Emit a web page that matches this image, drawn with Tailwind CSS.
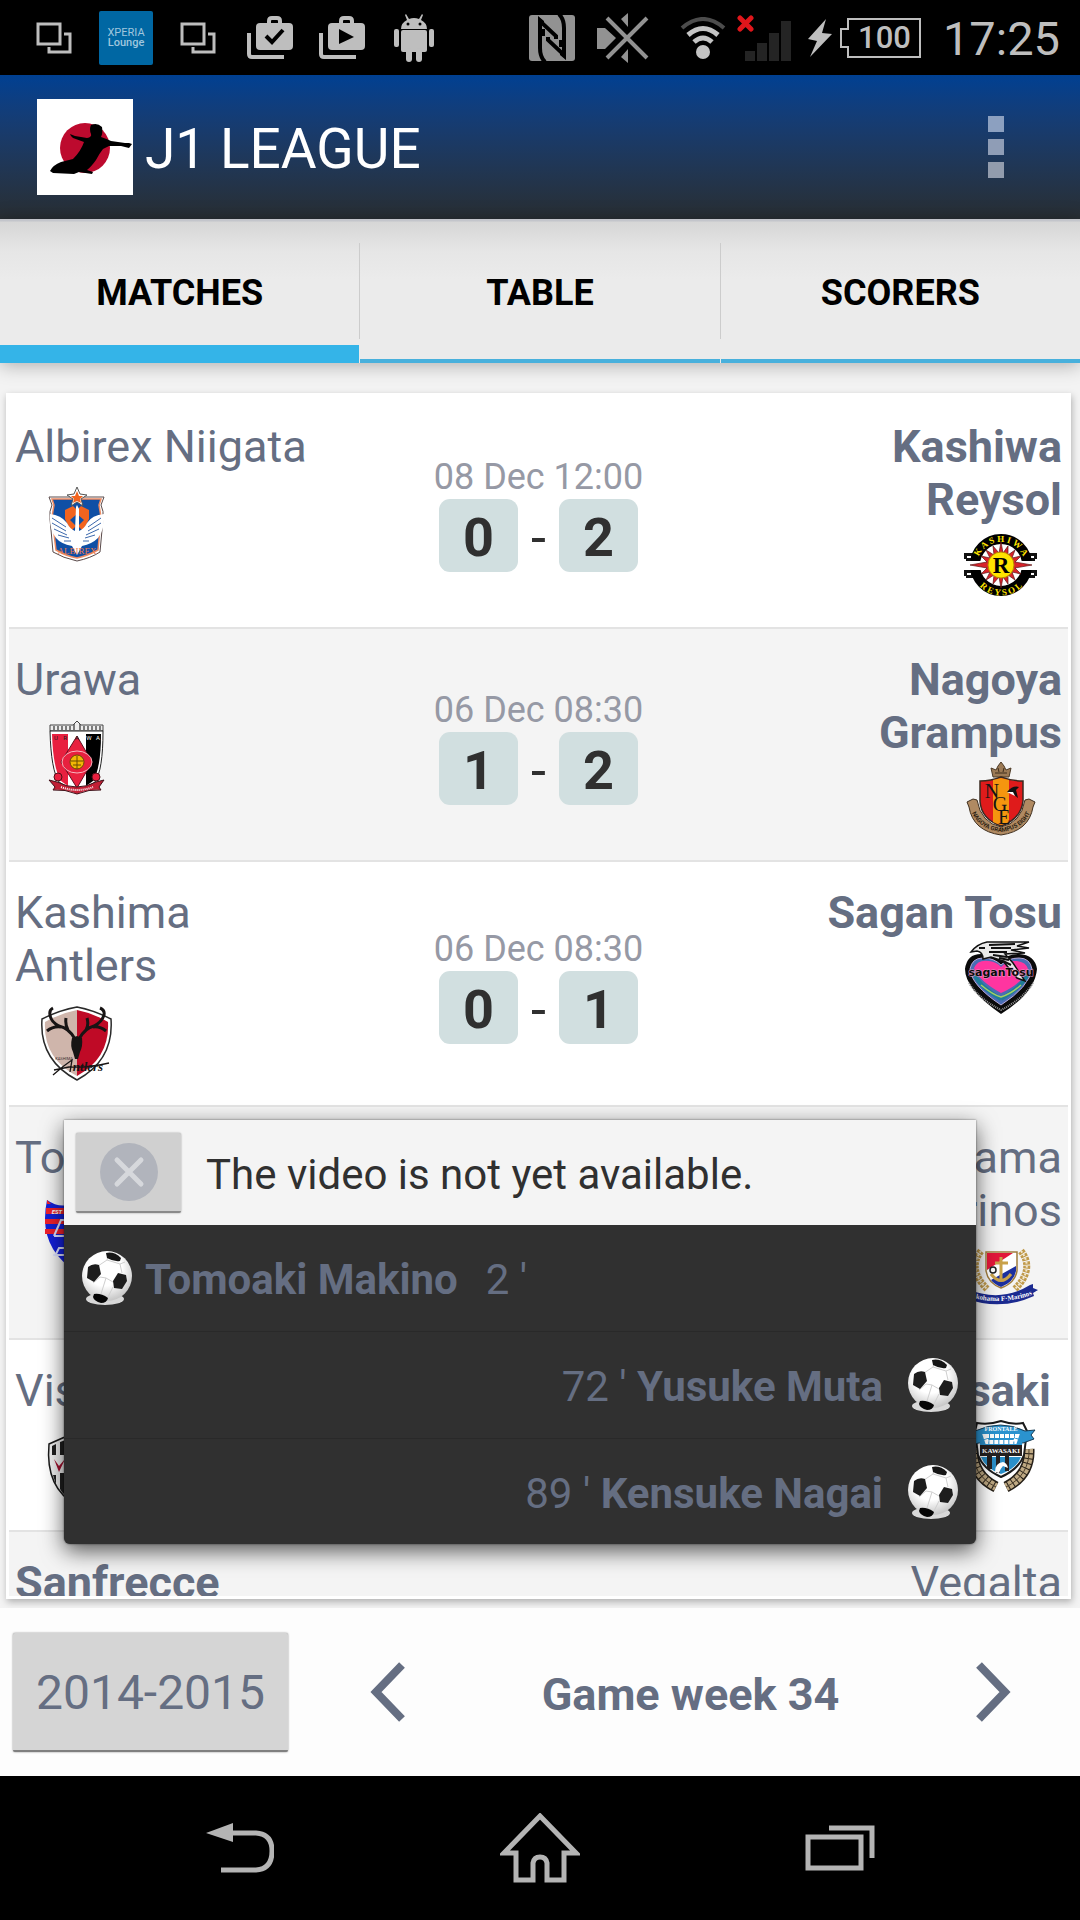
<!DOCTYPE html>
<html lang="en">
<head>
    <meta charset="UTF-8">
    <meta name="viewport" content="width=device-width, initial-scale=1.0">
    <title>J1 League</title>
    <script src="https://cdn.jsdelivr.net/npm/@tailwindcss/browser@4"></script>
</head>
<body class="h-screen flex flex-col overflow-hidden bg-[#f3f3f3] font-['Roboto',sans-serif]">
    <!-- shared symbols -->
    <svg class="absolute size-0" aria-hidden="true">
        <defs>
            <radialGradient id="ballShade" cx="0.45" cy="0.35" r="0.7">
                <stop offset="0.5" stop-color="#ffffff" />
                <stop offset="1" stop-color="#bdbdbd" />
            </radialGradient>
        </defs>
        <symbol id="ball" viewBox="0 0 52 56">
            <ellipse cx="24" cy="49" rx="19" ry="6" fill="#d8d8d8" />
            <circle cx="26" cy="26" r="25" fill="url(#ballShade)" />
            <path d="M17 16 L26 10 L39 14 L41 23 M26 10 L27 6 M19 27 L25 28 L32 32 M19 27 L12 33 M25 28 L20 44 M32 37 L27 47 M39 14 L44 12" fill="none" stroke="#cfcfcf" stroke-width="1" />
            <path d="M25 3 Q33 1 40 8 L39 11 Q33 12 26 8 Z" fill="#161616" />
            <path d="M7 17 Q12 13 18 15 L20 24 L13 32 L6 28 Z" fill="#1d1d1d" />
            <path d="M37 23 L45 25 L46 31 L41 39 L33 38 L32 31 Z" fill="#1d1d1d" />
            <path d="M13 44 Q20 43 27 48 Q26 53 20 53 Q13 51 12 47 Z" fill="#060606" />
        </symbol>
        <symbol id="windows" viewBox="0 0 36 32">
            <path d="M2 2 H24 V22 H2 Z M28 12 H34 V30 H13 V25" fill="none" stroke="#bebebe" stroke-width="3" />
        </symbol>
    </svg>

    <!-- status bar -->
    <div class="h-[75px] shrink-0 bg-black text-[#bebebe] flex items-center pl-[18px] pr-5">
        <div class="w-[72px] flex justify-center"><svg class="w-9 h-8"><use href="#windows" /></svg></div>
        <div class="w-[72px] flex justify-center">
            <div class="size-[54px] rounded-xs bg-[#0067a3] flex flex-col items-center justify-center text-[#9fc6de] text-[11px] leading-[10px]">
                <span>XPERIA</span>
                <span class="font-medium">Lounge</span>
            </div>
        </div>
        <div class="w-[72px] flex justify-center"><svg class="w-9 h-8"><use href="#windows" /></svg></div>
        <div class="w-[72px] flex justify-center">
            <svg class="w-[46px] h-11" viewBox="0 0 46 44">
                <path d="M2 17 V38 Q2 41 5 41 H37" fill="none" stroke="#bebebe" stroke-width="4" />
                <rect x="9" y="7" width="37" height="27" rx="4" fill="#bebebe" />
                <path d="M22 8 V5 Q22 2 25 2 H30 Q33 2 33 5 V8" fill="none" stroke="#bebebe" stroke-width="4" />
                <path d="M19 20 L25 26 L36 14" fill="none" stroke="#000" stroke-width="4" />
            </svg>
        </div>
        <div class="w-[72px] flex justify-center">
            <svg class="w-[46px] h-11" viewBox="0 0 46 44">
                <path d="M2 17 V38 Q2 41 5 41 H37" fill="none" stroke="#bebebe" stroke-width="4" />
                <rect x="9" y="7" width="37" height="27" rx="4" fill="#bebebe" />
                <path d="M22 8 V5 Q22 2 25 2 H30 Q33 2 33 5 V8" fill="none" stroke="#bebebe" stroke-width="4" />
                <path d="M20 13 L35 21 L20 28 Z" fill="#000" />
            </svg>
        </div>
        <div class="w-[72px] flex justify-center">
            <svg class="w-10 h-12" viewBox="0 0 40 48" fill="#bebebe">
                <path d="M7 15 Q7 9 13 6 L11 1 L12 0 L15 5 Q20 3 25 5 L28 0 L29 1 L27 6 Q33 9 33 15 Z" />
                <circle cx="14" cy="10" r="1.5" fill="#000" />
                <circle cx="26" cy="10" r="1.5" fill="#000" />
                <rect x="7" y="16" width="26" height="22" rx="2" />
                <rect x="0" y="15" width="5" height="18" rx="2" />
                <rect x="35" y="15" width="5" height="18" rx="2" />
                <rect x="12" y="34" width="6" height="14" rx="3" />
                <rect x="22" y="34" width="6" height="14" rx="3" />
            </svg>
        </div>

        <svg class="w-[46px] h-[46px] ml-auto" viewBox="0 0 46 46">
            <rect width="46" height="46" rx="3" fill="#929292" />
            <path d="M16 47 Q11 42 11 33 V6 L27 21 V24 M14 21 V14" fill="none" stroke="#000" stroke-width="4" />
            <path d="M30 -1 Q35 4 35 13 V40 L19 25 V22 M32 25 V32" fill="none" stroke="#000" stroke-width="4" />
            <path d="M9 1 L15 6 L15 11 L9 8 Z M37 45 L31 40 L31 35 L37 38 Z" fill="#000" />
        </svg>
        <svg class="w-[52px] h-[50px] ml-[22px]" viewBox="0 0 52 50">
            <path d="M0 15 H8 L19 25 L8 36 H0 Z M24 6 L31 0 V14 Z M24 44 L31 50 V36 Z" fill="#929292" />
            <path d="M10 5 L50 45 M50 5 L10 45" stroke="#929292" stroke-width="4" />
        </svg>
        <svg class="w-[46px] h-[42px] ml-[31px]" viewBox="0 0 46 42" fill="none">
            <path d="M2 11 Q23 -7 44 11" stroke="#4c4c4c" stroke-width="4" />
            <path d="M8 18 Q23 5 38 18" stroke="#c4c4c4" stroke-width="5" />
            <path d="M14 25 Q23 17 32 25" stroke="#c4c4c4" stroke-width="5" />
            <circle cx="23" cy="35" r="7" fill="#c4c4c4" />
        </svg>
        <svg class="w-[54px] h-[46px] ml-[11px]" viewBox="0 0 54 46">
            <path d="M8 36 h10 v10 h-10 Z M20 28 h10 v18 h-10 Z M32 18 h10 v28 h-10 Z M44 6 h10 v40 h-10 Z" fill="#242424" />
            <path d="M3 3 L14 14 M14 3 L3 14" stroke="#e0161b" stroke-width="5" stroke-linecap="round" />
        </svg>
        <svg class="w-6 h-[38px] ml-[17px]" viewBox="0 0 24 38" fill="#bebebe">
            <path d="M18 0 L0 20 L9 22 L2 38 L24 15 L14 14 Z" />
        </svg>
        <div class="relative ml-2 w-[81px] h-10 flex items-center justify-center pl-2 text-[31px] leading-10 font-medium">
            <svg class="absolute inset-0 size-full" viewBox="0 0 81 40">
                <path d="M8 1 H80 V39 H8 V29 H1 V11 H8 Z" fill="none" stroke="#bebebe" stroke-width="2" />
            </svg>
            <span>100</span>
        </div>
        <time class="ml-[22px] pt-[2px] text-[47px] leading-[54px]">17:25</time>
    </div>

    <!-- action bar -->
    <header class="h-36 shrink-0 flex items-center pl-[37px] pr-[76px] bg-linear-to-b from-[#004092] to-[#282e33]">
        <svg class="size-24 bg-white" viewBox="0 0 96 96">
            <circle cx="48" cy="49" r="25" fill="#bd0a2e" />
            <path d="M54 26 Q60 23 65 28 Q66 34 64 38 Q70 40 74 42 L88 44 L92 44 L95 45 L92 49 L84 47 L72 47 L66 50 Q62 55 59 61 Q54 68 50 71 L56 73 L55 75 L42 73 L37 75 L16 74 L13 72 Q16 66 24 63 L36 60 Q44 52 47 43 L36 39 L34 37 L33 35 L38 37 L50 39 Q55 38 54 35 Q52 30 54 26 Z" fill="#000" />
        </svg>
        <h1 class="ml-3 pt-1 text-white text-[55px] leading-16">J1 LEAGUE</h1>
        <button type="button" aria-label="More options" class="ml-auto flex flex-col gap-[7px]">
            <span class="size-4 bg-[#8ca0c0]"></span>
            <span class="size-4 bg-[#8f9db6]"></span>
            <span class="size-4 bg-[#929cad]"></span>
        </button>
    </header>

    <!-- tabs -->
    <nav class="relative z-10 h-36 shrink-0 grid grid-cols-3 gap-px bg-[linear-gradient(#c3c5cb_0px,#c3c5cb_2px,#d6d6d6_3px,#e6e6e6_32px,#ebebeb_60px)] text-black text-[36px] leading-[42px] font-bold shadow-[0_2px_18px_rgba(0,0,0,0.3)]">
        <a href="#matches" class="relative flex items-center justify-center border-b-[18px] border-[#34b4e8] pt-[22px]">MATCHES</a>
        <a href="#table" class="relative flex items-center justify-center border-b-4 border-[#48b0dc] pt-2">
            <span class="absolute -left-px top-6 h-24 w-px bg-[#cccccc]"></span>TABLE
        </a>
        <a href="#scorers" class="relative flex items-center justify-center border-b-4 border-[#48b0dc] pt-2">
            <span class="absolute -left-px top-6 h-24 w-px bg-[#cccccc]"></span>SCORERS
        </a>
    </nav>

    <main class="relative flex-1 min-h-0 flex flex-col pt-[30px] pb-[9px] pl-[6px] pr-[9px]">
        <div class="flex-1 min-h-0 bg-white p-[3px] shadow-[1px_3px_7px_rgba(0,0,0,0.28)]">
            <ul class="h-full overflow-hidden text-[#656e82] text-[45px] leading-[53px]">
                <li class="flex justify-between py-6 px-[6px] border-b-2 border-[#e3e3e3]">
                    <div class="w-[300px]">
                        <p>Albirex Niigata</p>
                        <svg class="size-[75px] mt-[14px] mx-6" viewBox="0 0 75 75">
                            <path d="M10 10 H65 L62 18 Q65 24 64 32 L61 65 Q52 71 38 74 Q24 71 14 65 L11 32 Q10 24 13 18 Z" fill="#fff" stroke="#5a4a4a" stroke-width="1" />
                            <path d="M13 12 H62 L60 18 L62 30 L59 63 Q48 69 38 71 Q27 69 17 63 L13 30 L15 18 Z" fill="#0f4fa5" stroke="#ee8b62" stroke-width="1.5" />
                            <path d="M26 23 L34 19 L38 23 L42 19 L50 23 L50 32 L44 44 L38 38 L32 44 L26 32 Z" fill="#f2641f" />
                            <path d="M38 27 L45 33 L38 40 L31 33 Z" fill="#0f4fa5" />
                            <path d="M37 20 L38 18 L40 22 L40 44 Q45 42 48 36 Q53 28 65 27 Q66 42 59 51 Q53 57 43 59 L38 68 L33 59 Q22 57 17 51 Q10 42 11 27 Q22 28 28 36 Q31 42 36 44 Z" fill="#fff" />
                            <path d="M13 31 L27 40 M13 36 L27 44 M15 42 L28 48 M19 48 L30 51 M25 54 L32 54 M62 31 L49 40 M62 36 L49 44 M60 42 L47 48 M56 48 L46 51 M50 54 L44 54" stroke="#3c68ac" stroke-width="1" />
                            <text x="38" y="67" text-anchor="middle" font-family="Liberation Serif" font-size="9" fill="#ee7a4a">ALBIREX</text>
                            <path d="M38 0 L41 7 L48 8 L42 12 L44 19 L38 15 L32 19 L34 12 L28 8 L35 7 Z" fill="#fff" stroke="#555" stroke-width="1" />
                            <path d="M38 4 L40 9 L44 9 L41 12 L42 16 L38 14 L34 16 L35 12 L32 9 L36 9 Z" fill="#f2641f" />
                        </svg>
                    </div>
                    <div class="self-center pt-[5px]">
                        <p class="text-center text-[#9699a5] text-[36px] leading-[42px]">08 Dec 12:00</p>
                        <div class="mt-px flex justify-center text-center text-[#303030] text-[54px] leading-[69px]">
                            <b class="w-[79px] pt-1 rounded-[11px] bg-[#d1dfe0]">0</b>
                            <span class="w-[41px] pt-1">-</span>
                            <b class="w-[79px] pt-1 rounded-[11px] bg-[#d1dfe0]">2</b>
                        </div>
                    </div>
                    <div class="w-[300px] flex flex-col items-end text-right">
                        <p class="font-bold">Kashiwa Reysol</p>
                        <svg class="size-[75px] mt-[2px] mx-6" viewBox="0 0 75 75">
                            <path d="M1 25 h10 v8 h-10 Z M1 42 h10 v8 h-10 Z M65 25 h9 v8 h-9 Z M65 42 h9 v8 h-9 Z" fill="#111" />
                            <path d="M4 28 h4 v2 h-4 Z M4 45 h4 v2 h-4 Z M68 28 h3 v2 h-3 Z M68 45 h3 v2 h-3 Z M0 31 h3 v2 h-3 Z M0 48 h3 v2 h-3 Z M72 31 h3 v2 h-3 Z M72 48 h3 v2 h-3 Z" fill="#fff" />
                            <circle cx="38" cy="37" r="26" fill="#fff" stroke="#000" stroke-width="10" />
                            <path d="M0 33 H76 V42 H0 Z" fill="#fff" />
                            <path d="M38 14 L40 25 L45 18 L45 27 L52 22 L49 30 L58 28 L52 34 L69 37 L52 40 L58 46 L49 44 L52 52 L45 47 L45 56 L40 49 L38 60 L36 49 L30 56 L31 47 L23 52 L27 44 L18 46 L24 40 L7 37 L24 34 L18 28 L27 30 L23 22 L31 27 L30 18 L36 25 Z" fill="#d8232a" stroke="#5b1515" stroke-width="0.7" />
                            <circle cx="38" cy="37" r="13" fill="#ffe400" stroke="#b88a00" stroke-width="1" />
                            <text x="38" y="45" text-anchor="middle" font-family="Liberation Serif" font-weight="bold" font-size="23" fill="#000">R</text>
                            <path id="ringTop" d="M15 31 A24 24 0 0 1 61 31" fill="none" />
                            <path id="ringBottom" d="M10 46 A29 29 0 0 0 66 46" fill="none" />
                            <g font-family="Liberation Serif" font-weight="bold" font-size="9" fill="#ffe400" text-anchor="middle">
                                <text><textPath href="#ringTop" startOffset="50%">K A S H I W A</textPath></text>
                                <text><textPath href="#ringBottom" startOffset="50%">R E Y S O L</textPath></text>
                            </g>
                        </svg>
                    </div>
                </li>

                <li class="flex justify-between py-6 px-[6px] border-b-2 border-[#e3e3e3] bg-[#f4f4f4]">
                    <div class="w-[300px]">
                        <p>Urawa</p>
                        <svg class="size-[75px] mt-[14px] mx-6" viewBox="0 0 75 75">
                            <path d="M11 5 H34 L38 1 L42 5 H64 V11 H11 Z" fill="#eee" stroke="#444" stroke-width="1" />
                            <path d="M15 6 V10 M19 6 V10 M23 6 V10 M27 6 V10 M31 6 V10 M35 4 V10 M41 4 V10 M45 6 V10 M49 6 V10 M53 6 V10 M57 6 V10 M61 6 V10" stroke="#555" stroke-width="1.5" />
                            <path d="M11 11 H64 Q64 50 56 62 L38 73 L20 62 Q12 50 11 11 Z" fill="#fff" stroke="#222" stroke-width="1" />
                            <path d="M13 14 H29 V66 L22 61 Q14 48 13 14 Z" fill="#e8203f" />
                            <path d="M47 14 H62 Q62 48 54 61 L47 66 Z" fill="#000" />
                            <path d="M38 16 L53 42 L38 68 L22 42 Z" fill="#e8203f" stroke="#601020" stroke-width="1" />
                            <ellipse cx="38" cy="42" rx="15" ry="11" fill="#e8203f" stroke="#f7b5bf" stroke-width="1" />
                            <circle cx="38" cy="42" r="7" fill="#f2b705" stroke="#6b4a00" stroke-width="1" />
                            <path d="M32 41 H44 M34 45 H42 M38 36 V49" stroke="#6b4a00" stroke-width="1" />
                            <path d="M10 60 L18 62 Q38 72 57 62 L65 60 L60 67 L62 70 Q50 69 38 74 Q26 69 14 70 L16 67 Z" fill="#c11f35" stroke="#401018" stroke-width="1" />
                            <path d="M22 67 Q38 73 54 67" fill="none" stroke="#fff" stroke-width="2" stroke-dasharray="1 1" />
                            <circle cx="19" cy="57" r="4" fill="#e8203f" stroke="#501018" stroke-width="1" />
                            <circle cx="57" cy="57" r="4" fill="#e8203f" stroke="#501018" stroke-width="1" />
                            <g font-family="Roboto" font-size="6" text-anchor="middle" fill="#222">
                                <text x="17" y="20">U</text><text x="26" y="20">R</text>
                                <text x="38" y="20">A</text>
                                <text x="50" y="20" fill="#fff">W</text><text x="59" y="20" fill="#fff">A</text>
                            </g>
                        </svg>
                    </div>
                    <div class="self-center pt-[5px]">
                        <p class="text-center text-[#9699a5] text-[36px] leading-[42px]">06 Dec 08:30</p>
                        <div class="mt-px flex justify-center text-center text-[#303030] text-[54px] leading-[69px]">
                            <b class="w-[79px] pt-1 rounded-[11px] bg-[#d1dfe0]">1</b>
                            <span class="w-[41px] pt-1">-</span>
                            <b class="w-[79px] pt-1 rounded-[11px] bg-[#d1dfe0]">2</b>
                        </div>
                    </div>
                    <div class="w-[300px] flex flex-col items-end text-right">
                        <p class="font-bold">Nagoya Grampus</p>
                        <svg class="size-[75px] mt-[2px] mx-6" viewBox="0 0 75 75">
                            <path d="M30 16 L28 7 L33 9 L35 5 L38 1 L41 5 L43 9 L48 7 L46 16 Z" fill="#9c7a55" stroke="#4c3a26" stroke-width="1" />
                            <path d="M32 12 H44 M35 7 L36 11 M41 7 L40 11" stroke="#3c2c1a" stroke-width="1" />
                            <path d="M4 41 L10 38 L14 39 Q18 62 38 66 Q58 62 62 39 L66 38 L72 41 L70 46 Q66 70 38 74 Q10 70 6 46 Z" fill="#b08a62" stroke="#3f2f1f" stroke-width="1" />
                            <path d="M17 20 Q28 20 38 16 Q48 20 60 20 V40 Q58 58 38 65 Q18 58 17 40 Z" fill="#df1b1b" stroke="#3a2a20" stroke-width="1.5" />
                            <path d="M30 19 Q34 18 38 17 Q42 18 46 19 V61 Q42 63 38 64 Q34 63 30 61 Z" fill="#f5960f" />
                            <path d="M44 31 Q50 24 56 26 L53 29 L55 37 L50 33 Z" fill="#111" />
                            <path d="M44 31 L50 31 L52 35 Z" fill="#fff" />
                            <g font-family="Liberation Serif" font-size="20" fill="#151515" text-anchor="middle">
                                <text x="29" y="37">N</text><text x="37" y="50">G</text><text x="41" y="63">E</text>
                            </g>
                            <path id="grampusArc" d="M7 46 Q13 68 38 71 Q63 68 69 46" fill="none" />
                            <text font-family="Roboto" font-size="6" font-weight="bold" fill="#2c1f12" text-anchor="middle"><textPath href="#grampusArc" startOffset="50%">NAGOYA GRAMPUS EIGHT</textPath></text>
                        </svg>
                    </div>
                </li>

                <li class="flex justify-between py-6 px-[6px] border-b-2 border-[#e3e3e3]">
                    <div class="w-[300px]">
                        <p>Kashima Antlers</p>
                        <svg class="size-[75px] mt-[14px] mx-6" viewBox="0 0 75 75">
                            <path d="M38 1 Q54 4 72 13 Q75 54 38 74 Q0 54 3 13 Q21 4 38 1 Z" fill="#fff" stroke="#2a2a2a" stroke-width="1.5" />
                            <path d="M38 4 V70 Q4 52 6 16 Q22 7 38 4 Z" fill="#cfb5ab" />
                            <path d="M38 4 V70 Q71 52 69 16 Q54 7 38 4 Z" fill="#bf0a26" />
                            <path d="M33 32 L38 30 L43 32 Q44 40 41 46 L39 53 L36 53 L34 46 Q31 40 33 32 Z" fill="#171414" />
                            <path d="M36 33 Q30 22 20 20 Q12 16 11 9 Q10 4 14 2 M29 24 Q26 19 27 12 M22 21 Q14 20 8 25 M40 33 Q46 22 55 20 Q63 16 65 9 Q66 4 61 2 M47 24 Q50 19 48 12 M54 21 Q61 20 67 25" fill="none" stroke="#171414" stroke-width="3" />
                            <path d="M14 69 Q24 60 33 54 L31 66 M15 64 L30 61 Q50 62 70 57" fill="none" stroke="#171414" stroke-width="1.3" />
                            <text x="49" y="65" text-anchor="middle" font-family="Liberation Serif" font-style="italic" font-weight="bold" font-size="13" fill="#171414">ntlers</text>
                            <text x="25" y="54" text-anchor="middle" font-family="Roboto" font-size="4" fill="#3a2f2f">KASHIMA</text>
                        </svg>
                    </div>
                    <div class="self-center pt-[5px]">
                        <p class="text-center text-[#9699a5] text-[36px] leading-[42px]">06 Dec 08:30</p>
                        <div class="mt-px flex justify-center text-center text-[#303030] text-[54px] leading-[69px]">
                            <b class="w-[79px] pt-1 rounded-[11px] bg-[#d1dfe0]">0</b>
                            <span class="w-[41px] pt-1">-</span>
                            <b class="w-[79px] pt-1 rounded-[11px] bg-[#d1dfe0]">1</b>
                        </div>
                    </div>
                    <div class="w-[300px] flex flex-col items-end text-right">
                        <p class="font-bold">Sagan Tosu</p>
                        <svg class="size-[75px] mt-[2px] mx-6" viewBox="0 0 75 75">
                            <path d="M38 73 Q2 48 2 28 Q4 12 20 13 Q32 14 38 20 Q44 13 56 13 Q72 14 74 28 Q72 52 38 73 Z" fill="#0a0a0a" />
                            <path d="M38 64 Q8 44 7 28 Q9 17 20 17 Q31 17 38 24 Q45 17 56 17 Q67 17 69 28 Q66 46 38 64 Z" fill="#4a6db5" stroke="#b9a9d6" stroke-width="1" />
                            <path d="M38 58 Q14 44 10 30 M38 58 Q62 44 66 30" fill="none" stroke="#1e7d97" stroke-width="4" />
                            <path d="M18 44 Q30 54 38 56 Q48 53 58 44" fill="none" stroke="#a5cf62" stroke-width="1.5" />
                            <path d="M38 52 Q16 40 11 27 Q15 18 26 20 Q34 21 38 26 Q44 19 54 20 Q63 21 65 28 Q60 42 38 52 Z" fill="#ff35a0" />
                            <path d="M8 11 Q14 3 24 1 L66 1 L54 5 L66 7 L48 9 L62 12 L42 13 L50 22 L62 40 L54 37 L40 20 L28 16 L20 18 Q20 11 14 10 Z" fill="#e9e9e9" stroke="#111" stroke-width="1.5" />
                            <path d="M26 4 L52 3 M28 7 L48 7 M26 11 L44 11 M30 14 L44 16 M36 17 L46 19 M40 20 L48 24 M16 7 L22 7" stroke="#111" stroke-width="2" />
                            <text x="38" y="35" text-anchor="middle" font-family="DejaVu Sans" font-weight="bold" font-size="11" fill="#0a0a0a" stroke="#e79cc4" stroke-width="1" paint-order="stroke">saganTosu</text>
                            <path d="M6 42 Q16 58 38 69 Q60 58 70 42" fill="none" stroke="#999" stroke-width="2" stroke-dasharray="1 1" />
                        </svg>
                    </div>
                </li>

                <li class="flex justify-between py-6 px-[6px] border-b-2 border-[#e3e3e3] bg-[#f4f4f4]">
                    <div class="w-[300px]">
                        <p>Tokyo</p>
                        <svg class="size-[75px] mt-[14px] mx-6" viewBox="0 0 75 75">
                            <path d="M8 2 Q22 12 38 4 Q54 12 68 2 Q78 50 38 74 Q-2 50 8 2 Z" fill="#1420d8" />
                            <path d="M7 10 H69 V16 H7 Z M6 21 H70 V26 H6 Z M6 31 H70 V36 H6 Z M8 2 L12 6 L8 6 Z" fill="#f0202c" />
                            <text x="18" y="16" text-anchor="middle" font-family="Roboto" font-weight="bold" font-style="italic" font-size="6" fill="#fff">EST</text>
                            <path d="M15 38 L22 22 H60 M15 38 H50 M16 58 L20 50 H50 M14 57 H40" fill="none" stroke="#dfe3ff" stroke-width="2" />
                        </svg>
                    </div>
                    <div class="w-[300px] flex flex-col items-end text-right">
                        <p>Yokohama<br>F. Marinos</p>
                        <svg class="size-[75px] mt-[2px] mx-6" viewBox="0 0 75 75">
                            <path d="M18 12 Q4 30 24 50 M58 12 Q72 30 52 50" fill="none" stroke="#c09a4c" stroke-width="7" stroke-dasharray="3 1" />
                            <path d="M18 12 Q4 30 24 50 M58 12 Q72 30 52 50" fill="none" stroke="#f0e6cc" stroke-width="2" stroke-dasharray="2 2" />
                            <path d="M23 13 H54 V32 Q52 44 38 49 Q25 44 23 32 Z" fill="#fff" stroke="#a07c3c" stroke-width="1.5" />
                            <path d="M24 14 H50 L24 31 Z" fill="#e3173a" />
                            <path d="M53 27 V32 Q51 43 38 48 Q31 45 28 41 Z" fill="#1b2f9e" />
                            <path d="M38 18 V42 M32 24 H45 M28 35 Q38 48 48 35" fill="none" stroke="#c9a24a" stroke-width="3" />
                            <circle cx="30" cy="31" r="3" fill="#fff" stroke="#222" stroke-width="1.5" />
                            <path d="M4 50 Q38 64 67 46 L70 45 L70 49 L75 51 L70 54 L71 57 Q38 72 4 60 Z" fill="#1b2a90" />
                            <path id="marinosArc" d="M3 57 Q38 68 71 55" fill="none" />
                            <text font-family="Liberation Serif" font-weight="bold" font-size="7" fill="#fff" text-anchor="middle"><textPath href="#marinosArc" startOffset="50%">Yokohama F·Marinos</textPath></text>
                        </svg>
                    </div>
                </li>

                <li class="flex justify-between py-6 px-[6px] border-b-2 border-[#e3e3e3]">
                    <div class="w-[300px]">
                        <p>Vissel Kobe</p>
                        <svg class="size-[75px] mt-[14px] mx-6" viewBox="0 0 75 75">
                            <path d="M10 13 Q24 6 38 2 Q52 6 66 13 Q70 58 38 74 Q6 58 10 13 Z" fill="#f2f2f2" stroke="#1a1a1a" stroke-width="1.5" />
                            <path d="M13 15 L17 13 V24 H13 Z M21 11 L32 7 V24 H21 Z M14 44 L17 44 V54 Z M21 42 H32 V68 Q24 64 21 58 Z" fill="#1f1f1f" />
                            <path d="M15 28 L20 35 L26 28 L20 41 Z" fill="#a3102f" />
                        </svg>
                    </div>
                    <div class="w-[300px] flex flex-col items-end text-right">
                        <p class="font-bold">Kawasaki&nbsp;</p>
                        <svg class="size-[75px] mt-[2px] mx-6" viewBox="0 0 75 75">
                            <path d="M10 30 Q9 56 33 68 M66 30 Q67 56 43 68" fill="none" stroke="#262018" stroke-width="11" />
                            <path d="M10 30 Q9 56 33 68 M66 30 Q67 56 43 68" fill="none" stroke="#bfa983" stroke-width="8" stroke-dasharray="4 1" />
                            <path d="M10 30 Q9 56 33 68 M66 30 Q67 56 43 68" fill="none" stroke="#4a3d2a" stroke-width="1" />
                            <path d="M14 4 Q26 6 38 2 Q50 6 60 4 L64 12 L61 36 Q56 50 38 58 Q20 50 15 36 L12 12 Z" fill="#fff" stroke="#1b1b1b" stroke-width="2" />
                            <path d="M4 18 L12 12 Q38 0 62 12 L72 11 L68 16 L71 20 L60 24 Q38 16 16 24 L6 26 Z" fill="#2b93cf" stroke="#173c55" stroke-width="1" />
                            <path d="M16 16 Q38 8 60 16 L59 26 H17 Z" fill="#2b93cf" />
                            <path d="M22 17 L54 17 L52 23 L24 23 Z" fill="none" stroke="#fff" stroke-width="4" stroke-dasharray="4 1" />
                            <path d="M17 26 H59 V37 H17 Z" fill="#242020" />
                            <path d="M18 38 H58 Q54 49 38 55 Q22 49 18 38 Z" fill="#2a8fc9" />
                            <path d="M24 37 h5 v13 h-5 Z M33 37 h4 v17 h-4 Z M42 37 h4 v15 h-4 Z" fill="#242020" />
                            <path d="M32 53 Q32 44 40 43 Q44 44 45 49 L40 47 Q37 50 36 54 Z" fill="#fff" />
                            <g font-family="Liberation Serif" font-weight="bold" fill="#fff" text-anchor="middle">
                                <text x="38" y="12" font-size="6">FRONTALE</text>
                                <text x="38" y="34" font-size="7">KAWASAKI</text>
                            </g>
                        </svg>
                    </div>
                </li>

                <li class="flex justify-between py-6 px-[6px] bg-[#f4f4f4]">
                    <p class="w-[300px] font-bold">Sanfrecce Hiroshima</p>
                    <p class="w-[300px] text-right">Vegalta<br>Sendai</p>
                </li>
            </ul>
        </div>

        <!-- goal scorers popup -->
        <section role="dialog" aria-label="Goals" class="absolute z-20 left-16 right-[104px] top-[757px] rounded-b-md overflow-hidden bg-[#303030] text-[#656e82] text-[42px] leading-[50px] shadow-[0_7px_22px_rgba(0,0,0,0.65),0_0_2px_rgba(0,0,0,0.6)]">
            <div class="h-[105px] flex items-center gap-[25px] pl-3 bg-[#f4f4f4] text-[#303030]">
                <button type="button" aria-label="Close" class="w-[105px] h-20 rounded-xs bg-[#d0d0d0] border-b-2 border-[#8a8a8a] shadow-[0_0_2px_rgba(0,0,0,0.4)] flex items-center justify-center">
                    <svg class="size-[58px]" viewBox="0 0 58 58">
                        <circle cx="29" cy="29" r="29" fill="#b1b4bc" />
                        <path d="M17 17 L41 41 M41 17 L17 41" stroke="#d6d8dc" stroke-width="5" stroke-linecap="round" />
                    </svg>
                </button>
                <p class="pt-1">The video is not yet available.</p>
            </div>
            <ul>
                <li class="h-[107px] flex items-center pl-[17px] border-b border-[#292929]">
                    <svg class="w-[52px] h-14"><use href="#ball" /></svg>
                    <p class="ml-3 pt-1 flex gap-7"><b>Tomoaki Makino</b> <span>2 '</span></p>
                </li>
                <li class="h-[107px] flex items-center justify-end pr-[17px] border-b border-[#292929]">
                    <p class="mr-6 pt-1">72 ' <b>Yusuke Muta</b></p>
                    <svg class="w-[52px] h-14"><use href="#ball" /></svg>
                </li>
                <li class="h-[105px] flex items-center justify-end pr-[17px]">
                    <p class="mr-6 pt-1">89 ' <b>Kensuke Nagai</b></p>
                    <svg class="w-[52px] h-14"><use href="#ball" /></svg>
                </li>
            </ul>
        </section>
    </main>

    <!-- season and game week -->
    <footer class="relative z-10 h-[168px] shrink-0 flex items-center pl-[13px] pr-[69px] bg-[#fdfdfd] text-[#656e82]">
        <button type="button" class="w-[275px] h-[119px] pt-1 rounded-xs bg-[#d5d5d5] border-b-2 border-[#808080] shadow-[0_0_2px_rgba(0,0,0,0.5)] text-[48px] leading-14">2014-2015</button>
        <div class="flex-1 flex items-center justify-between ml-[82px]">
            <button type="button" aria-label="Previous week">
                <svg class="w-9 h-[60px]" viewBox="0 0 36 60" fill="none"><path d="M32 3 L6 30 L32 57" stroke="#656e82" stroke-width="8" /></svg>
            </button>
            <p class="pt-1 text-[45px] leading-[53px] font-bold">Game week 34</p>
            <button type="button" aria-label="Next week">
                <svg class="w-9 h-[60px]" viewBox="0 0 36 60" fill="none"><path d="M4 3 L30 30 L4 57" stroke="#656e82" stroke-width="8" /></svg>
            </button>
        </div>
    </footer>

    <!-- system navigation -->
    <div class="relative z-10 h-36 shrink-0 bg-black grid grid-cols-3 px-[90px]">
        <button type="button" aria-label="Back" class="flex items-center justify-center">
            <svg class="w-[68px] h-[50px]" viewBox="0 0 68 50">
                <path d="M26 10 H50 Q66 11 66 28 Q66 46 50 47 H15" fill="none" stroke="#b4b4b4" stroke-width="5" />
                <path d="M0 10 L27 0 V19 Z" fill="#b4b4b4" />
            </svg>
        </button>
        <button type="button" aria-label="Home" class="flex items-center justify-center">
            <svg class="w-20 h-[70px]" viewBox="0 0 80 70">
                <path d="M40 3 L4 40 H16 V67 H33 V50 Q34 44 40 44 Q46 44 47 50 V67 H64 V40 H76 Z" fill="none" stroke="#b4b4b4" stroke-width="5" />
            </svg>
        </button>
        <button type="button" aria-label="Recent apps" class="flex items-center justify-center">
            <svg class="w-[70px] h-[46px]" viewBox="0 0 70 46">
                <path d="M3 12 H56 V43 H3 Z M24 3 H67 V33" fill="none" stroke="#b4b4b4" stroke-width="5" />
            </svg>
        </button>
    </div>
</body>
</html>
